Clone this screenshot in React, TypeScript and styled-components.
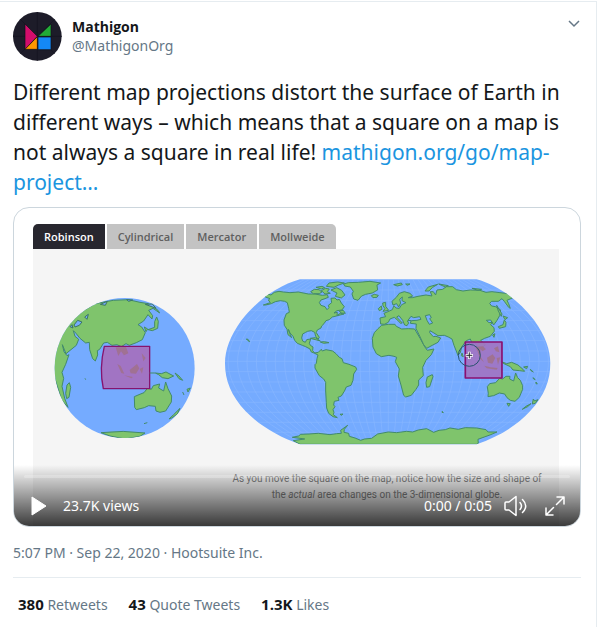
import React from "react";
import styled, { createGlobalStyle } from "styled-components";

const GlobalStyle = createGlobalStyle`
  *, *::before, *::after { box-sizing: border-box; }
  body {
    margin: 0;
    background: #fff;
    color: #14171a;
    font-family: "Noto Sans", "Open Sans", sans-serif;
    font-size: 14px;
    line-height: 20px;
  }
  button { font: inherit; color: inherit; border: 0; padding: 0; background: none; cursor: pointer; }
  a { color: inherit; text-decoration: none; }
  svg { display: block; }
`;

const Tweet = styled.article`
  margin-top: 1px;
  min-height: calc(100vh - 1px);
  padding: 10px 15px 12px 13px;
  border-top: 1px solid #e6ecf0;
  border-right: 1px solid #e6ecf0;
`;

const Header = styled.header`
  display: flex;
  align-items: flex-start;
  gap: 10px;
`;

const Author = styled.a`
  flex: 1;
  display: flex;
  flex-direction: column;
  padding-top: 5px;
  line-height: 19px;
`;

const Name = styled.strong`
  font-family: "Open Sans", sans-serif;
  font-weight: 700;
`;

const Count = styled(Name)`
  font-size: 15px;
`;

const Muted = styled.span`
  color: #657786;
`;

const MenuButton = styled.button`
  margin-top: 6px;
  margin-right: 1px;
`;

const Message = styled.p`
  margin: 16px 0 10px;
  font-size: 21px;
  line-height: 30px;
`;

const Link = styled.a`
  color: #1b95e0;
`;

const Player = styled.section`
  position: relative;
  overflow: hidden;
  border: 1px solid #ccd6dd;
  border-radius: 16px;
  background: #fff;
`;

const Scene = styled.div`
  padding: 16px 21px 0 19px;
`;

const Tabs = styled.div`
  display: flex;
  gap: 2px;
`;

const Tab = styled.button<{ $active?: boolean }>`
  height: 25px;
  padding: 0 11px;
  font-family: "Open Sans", sans-serif;
  font-size: 11px;
  font-weight: 600;
  color: ${(p) => (p.$active ? "#fff" : "#5f5f5f")};
  background: ${(p) => (p.$active ? "#28272f" : "#c3c3c3")};
  &:first-child { border-top-left-radius: 5px; }
  &:last-child { border-top-right-radius: 5px; }
`;

const Panel = styled.div`
  background: #f5f5f5;
`;

const Maps = styled.svg`
  width: 100%;
  height: auto;
`;

const Caption = styled.p`
  margin: 0;
  padding: 8px 14px 23px 196px;
  text-align: center;
  white-space: nowrap;
  font-family: Roboto, "Open Sans", sans-serif;
  font-size: 10px;
  line-height: 16px;
  color: #808080;
`;

const Overlay = styled.div`
  position: absolute;
  left: 0;
  right: 0;
  bottom: 0;
  padding: 10px 10px 8px;
  background: linear-gradient(rgba(0, 0, 0, 0), rgba(0, 0, 0, 0.77));
  color: #fff;
`;

const Progress = styled.div`
  height: 3px;
  border-radius: 2px;
  background: rgba(255, 255, 255, 0.25);
`;

const Controls = styled.div`
  display: flex;
  align-items: center;
  height: 40px;
  padding: 15px 5px 0 6px;
`;

const Views = styled.span`
  margin-left: 15px;
  margin-right: auto;
`;

const ControlButton = styled.button`
  margin-left: 12px;
  & + & { margin-left: 17px; }
`;

const PlayButton = styled.button`
  line-height: 0;
`;

const Meta = styled.div`
  padding: 16px 0 14px;
  border-bottom: 1px solid #e6ecf0;
  color: #657786;
`;

const Stats = styled.div`
  display: flex;
  gap: 21px;
  padding: 16px 5px 0;
`;

const stats = [
  { count: "380", label: "Retweets" },
  { count: "43", label: "Quote Tweets" },
  { count: "1.3K", label: "Likes" },
];

const tabs = ["Robinson", "Cylindrical", "Mercator", "Mollweide"];

const OUTLINE =
  "M255,28 C190,46 125,92 80,150 C45,198 30,240 30,280 C30,330 48,378 92,424 C135,468 190,500 255,523 H785 C850,500 905,468 945,424 C989,378 1006,330 1006,280 C1006,240 992,198 957,150 C912,92 850,46 785,28 Z";

const parallels = [60, 92, 122, 152, 182, 212, 243, 274, 305, 336, 366, 397, 427, 457, 487];
const meridians = Array.from({ length: 35 }, (_, i) => (i - 17) / 18);

const AMERICAS =
  "M148,76 L158,72 168,75 178,67 192,64 205,66 225,68 250,66 280,72 300,72 322,76 337,74 340,82 330,86 318,90 313,98 318,106 330,110 336,119 342,113 340,106 350,98 348,85 360,84 366,90 373,88 379,99 388,110 381,120 366,122 357,129 367,127 366,136 376,130 387,132 360,139 352,141 343,149 333,152 327,161 320,168 318,174 307,180 304,188 313,202 309,208 302,199 299,187 289,182 278,184 272,187 263,192 260,204 263,213 271,217 275,209 287,207 283,220 286,226 294,231 293,242 299,249 310,247 319,238 322,243 333,239 353,243 363,251 373,262 381,266 385,278 402,283 422,291 425,298 416,312 414,331 408,346 394,351 388,364 379,378 369,382 372,391 358,394 356,405 360,410 354,419 357,427 355,434 367,443 354,440 341,430 335,414 334,397 332,363 332,337 326,327 313,317 300,294 300,284 304,280 306,266 309,255 299,250 289,246 285,237 272,230 262,226 247,220 239,211 234,199 225,189 220,178 224,190 230,203 219,194 216,178 208,166 207,150 214,131 223,127 221,115 217,98 209,94 196,92 181,95 169,101 152,105 145,105 166,98 160,90 165,86 151,81 Z";
const NORTH_ISLANDS =
  "M386,42 L400,38 430,37 465,34 497,39 486,45 488,60 472,69 452,73 440,78 429,91 416,87 411,72 415,64 406,51 389,48 Z M469,77 L478,73 490,76 486,82 474,83 Z M287,65 L298,58 312,59 321,66 313,71 295,71 Z M303,52 L321,49 329,53 319,57 Z M319,62 L331,55 343,57 337,65 346,70 330,72 Z M334,49 L342,39 368,36 388,39 371,45 357,52 Z M348,60 L365,53 380,61 390,75 379,84 361,79 366,69 Z M373,123 L385,121 391,130 378,129 Z M286,205 L301,203 316,213 305,210 Z M316,216 L328,215 342,218 326,220 Z M94,207 L99,208 104,215 99,212 Z M375,433 L384,432 380,436 Z";
const AFRICA =
  "M5,166 L-6,176 -17,188 -23,205 -21,231 -11,251 4,260 27,256 42,259 50,262 46,275 58,297 55,318 63,345 71,376 77,381 94,376 108,358 116,345 116,330 130,317 128,292 138,271 154,254 162,237 142,241 134,230 121,206 108,184 104,177 85,176 65,177 49,169 45,163 25,163 Z";
const EURASIA =
  "M0,144 L2,162 13,163 25,157 30,147 43,142 51,149 62,160 67,159 50,141 57,137 68,151 74,165 81,167 86,159 82,153 94,150 91,160 109,162 108,176 119,198 131,224 140,235 157,226 174,217 182,204 168,199 160,200 149,188 150,182 165,191 174,197 193,196 205,201 216,207 222,226 234,256 241,248 245,231 259,212 271,207 276,220 284,217 293,230 307,233 316,224 302,211 314,205 331,199 343,184 342,173 332,164 338,157 327,158 319,151 332,150 341,165 350,153 359,137 362,120 347,110 335,108 329,100 335,94 355,94 366,86 373,94 386,112 391,115 386,101 381,91 397,84 404,81 386,71 360,68 336,65 318,67 300,61 271,60 249,63 229,59 218,50 199,50 188,58 171,60 167,75 160,65 151,65 156,78 138,75 114,79 97,83 85,83 98,78 90,70 73,65 58,70 49,82 36,94 39,105 50,101 56,111 62,99 59,88 67,81 66,92 78,98 65,104 58,115 48,114 42,107 37,119 24,125 12,130 17,140 Z";
const EAST_ISLANDS =
  "M8,99 L17,97 17,109 26,121 9,124 15,116 9,107 Z M-5,116 L4,108 6,118 -2,122 Z M41,44 L64,39 67,44 52,48 Z M77,42 L90,42 82,46 Z M135,63 L145,51 173,43 158,52 147,63 Z M176,42 L205,47 196,51 Z M276,55 L305,58 294,61 Z M142,321 L157,314 159,320 149,350 140,352 138,338 Z M350,106 L357,117 366,132 364,139 355,123 Z M369,138 L383,143 375,149 Z M373,150 L378,157 377,170 358,175 355,170 369,164 Z M362,274 L380,281 395,277 414,285 429,298 434,304 418,302 399,300 391,290 372,281 Z M431,291 L443,289 440,296 Z M322,350 L329,341 347,338 359,325 368,327 378,319 390,319 389,327 401,333 407,309 413,323 421,331 428,347 428,358 418,382 405,394 391,391 381,383 374,372 358,369 341,377 324,380 325,370 Z M381,400 L391,401 386,409 Z M460,387 L464,393 474,389 466,400 457,402 Z M453,401 L443,410 427,418 438,409 Z M451,298 L460,306 453,302 Z M459,323 L466,329 460,326 Z M468,336 L472,342 468,341 Z M187,424 L190,428 186,427 Z M246,249 L250,260 244,257 Z M345,191 L342,202 338,195 Z";
const ANTARCTICA =
  "M232,502 L251,498 257,493 282,492 310,490 345,494 365,491 379,490 377,481 398,466 388,478 387,487 401,490 403,499 420,504 437,511 449,507 470,505 488,492 520,486 545,488 575,484 593,486 610,480 635,476 656,487 672,481 691,479 705,474 730,478 751,473 785,474 813,479 819,486 846,486 825,495 789,508 790,520 785,523 H255 L235,512 269,507 Z";
const SEAS =
  "M84,151 L93,139 101,143 119,140 123,148 111,151 94,152 Z M136,137 L149,134 154,143 149,146 158,159 148,163 141,151 Z";

const GLOBE_LAND =
  "M65,125 L95,90 150,56 205,46 250,44 285,52 310,56 339,76 344,84 324,70 311,76 323,92 321,102 309,89 296,108 279,119 290,126 301,143 292,164 274,173 253,181 243,176 229,185 216,179 201,181 187,172 176,174 164,193 157,197 158,210 151,228 143,221 134,194 133,172 122,174 105,160 93,145 85,137 90,154 101,163 94,181 63,206 52,179 57,200 66,212 72,209 62,238 51,262 56,280 51,304 59,340 69,367 50,345 20,250 35,170 Z M66,300 L73,293 77,307 72,337 65,341 62,325 Z M268,335 L282,329 297,323 308,309 319,313 325,302 344,297 341,309 356,318 362,291 369,311 380,333 379,351 362,378 345,382 333,378 331,364 311,362 298,368 274,374 269,367 Z M331,264 L349,266 363,261 386,273 369,281 352,278 341,269 Z M390,264 L402,273 413,286 402,281 Z M426,313 L436,309 429,321 Z M372,402 L386,389 405,370 397,387 380,399 Z M335,96 L340,109 338,130 322,137 309,134 329,127 329,110 Z M298,126 L308,132 303,140 Z M168,443 Q235,435 300,444 L285,454 240,462 195,453 Z";
const GLOBE_DETAIL =
  "M87,120 L98,106 111,111 103,121 90,126 Z M119,96 L130,88 126,103 Z M166,58 L187,49 181,61 Z M245,44 L263,45 251,49 Z M301,58 L322,57 333,70 Z M75,125 L81,119 84,129 Z";

function MapsDrawing() {
  return (
    <Maps viewBox="33 249 526 214" role="img" aria-label="Globe beside a Robinson world map">
      <defs>
        <clipPath id="globe"><circle cx="239" cy="249" r="210" /></clipPath>
        <clipPath id="robinson"><path d={OUTLINE} /></clipPath>
      </defs>
      <g transform="translate(45 285) scale(0.3333)" strokeWidth="3" strokeLinejoin="round">
        <circle cx="239" cy="249" r="210" fill="#75abff" />
        <g clipPath="url(#globe)">
          <path d={GLOBE_LAND} fill="#7fc46c" stroke="#438b68" />
          <path d={GLOBE_DETAIL} fill="#75abff" stroke="#3b7560" />
        </g>
        <path d="M178,184 H314 V311 H175 Q162,250 178,184 Z" fill="#a174c3" stroke="#86146f" strokeWidth="4" />
        <g fill="#a0707f" opacity="0.7">
          <path d="M212,187 L243,186 250,205 237,211 228,199 220,213 Z" />
          <path d="M217,237 L227,243 238,266 229,264 Z M254,255 L276,237 283,250 273,266 257,265 Z M290,205 L302,219 295,229 Z M284,252 L295,247 291,266 Z M237,271 L264,276 259,280 Z" />
        </g>
        <path d="M314,264 H330 M120,280 l2,4 M297,416 l10,-3 M413,321 l4,9" fill="none" stroke="#438b68" />
      </g>
      <g transform="translate(215 270) scale(0.3333)" strokeWidth="3" strokeLinejoin="round">
        <path d={OUTLINE} fill="#75abff" />
        <g clipPath="url(#robinson)">
          <g fill="none" stroke="#a9caff" strokeWidth="2" opacity="0.35">
            {parallels.map((y) => <path key={y} d={`M20,${y} H1020`} />)}
            {meridians.map((m) => (
              <path key={m} d={`M${520 + m * 265},28 C${520 + m * 590},180 ${520 + m * 590},371 ${520 + m * 265},523`} />
            ))}
          </g>
          <g fill="#7fc46c" stroke="#438b68">
            <path d={AMERICAS} />
            <path d={NORTH_ISLANDS} />
            <path d={ANTARCTICA} />
            <g transform="translate(495 0)">
              <path d={AFRICA} />
              <path d={EURASIA} />
              <path d={EAST_ISLANDS} />
              <path d={SEAS} fill="#75abff" />
            </g>
          </g>
        </g>
        <g transform="translate(495 0)">
          <rect x="256" y="216" width="110" height="108" fill="#a174c3" fillOpacity="0.92" stroke="#8a1070" strokeWidth="5" />
          <g fill="#a0707f" opacity="0.75">
            <path d="M286,231 L309,229 318,238 307,244 301,237 302,260 312,277 300,266 293,244 Z M321,263 L338,253 346,264 337,281 324,278 Z M342,235 L354,229 358,247 348,244 Z M313,287 L332,292 353,294 350,299 320,295 Z M350,264 L361,262 354,284 Z" />
          </g>
          <circle cx="268" cy="256" r="33" fill="none" stroke="#28516e" strokeWidth="3" />
          <path d="M268,245 V267 M257,256 H279" stroke="#fff" strokeWidth="8" />
          <path d="M268,247 V265 M259,256 H277" stroke="#252831" strokeWidth="3" />
        </g>
      </g>
    </Maps>
  );
}

function Avatar() {
  return (
    <svg width="49" height="49" viewBox="0 0 147 147" aria-label="Mathigon logo">
      <circle cx="73" cy="73" r="73" fill="#1d1c29" />
      <path d="M73,0 V147 M0,73 H147 M22,22 L125,125 M125,22 L22,125" stroke="#141420" strokeWidth="2" />
      <g stroke="#111019" strokeWidth="2">
        <path d="M36,36 L73,73 L36,112 Z" fill="#d30d6c" />
        <path d="M114,36 V73 H75 Z" fill="#22ab36" />
        <path d="M73,74 V112 H36 Z" fill="#ff9800" />
        <path d="M75,75 H114 V113 H75 Z" fill="#1488f5" />
      </g>
    </svg>
  );
}

export default function App() {
  return (
    <>
      <GlobalStyle />
      <Tweet>
        <Header>
          <Avatar />
          <Author href="#mathigon">
            <Name>Mathigon</Name>
            <Muted>@MathigonOrg</Muted>
          </Author>
          <MenuButton aria-label="More options">
            <svg width="12" height="12" viewBox="0 0 12 12" fill="none" stroke="#657786" strokeWidth="1.5">
              <path d="M1,3 L6,8 L11,3" />
            </svg>
          </MenuButton>
        </Header>
        <Message>
          Different map projections distort the surface of Earth in different ways – which means that a square on a
          map is not always a square in real life! <Link href="#map-projections">mathigon.org/go/map-project…</Link>
        </Message>
        <Player>
          <Scene>
            <Tabs>
              {tabs.map((label, i) => <Tab key={label} $active={i === 0}>{label}</Tab>)}
            </Tabs>
            <Panel>
              <MapsDrawing />
              <Caption>
                As you move the square on the map, notice how the size and shape of
                <br />
                the <em>actual</em> area changes on the 3-dimensional globe.
              </Caption>
            </Panel>
          </Scene>
          <Overlay>
            <Progress />
            <Controls>
              <PlayButton aria-label="Play">
                <svg width="18" height="20" viewBox="0 0 18 20" fill="#fff" stroke="#fff" strokeLinejoin="round">
                  <path d="M2,1 L16,10 L2,19 Z" />
                </svg>
              </PlayButton>
              <Views>23.7K views</Views>
              <span>0:00 / 0:05</span>
              <ControlButton aria-label="Mute">
                <svg width="24" height="22" viewBox="0 0 24 22" fill="none" stroke="#fff" strokeWidth="1.5" strokeLinecap="round" strokeLinejoin="round">
                  <path d="M2,7 H5 L12,1.5 V20.5 L5,15 H2 Q1,15 1,14 V8 Q1,7 2,7 Z" />
                  <path d="M16,7.5 Q19,11 16,14.5 M18.5,4.5 Q25,11 18.5,17.5" />
                </svg>
              </ControlButton>
              <ControlButton aria-label="Full screen">
                <svg width="20" height="20" viewBox="0 0 20 20" fill="none" stroke="#fff" strokeWidth="1.5" strokeLinecap="round" strokeLinejoin="round">
                  <path d="M12,1 H19 V8 M19,1 L11.5,8.5 M8,19 H1 V12 M1,19 L8.5,11.5" />
                </svg>
              </ControlButton>
            </Controls>
          </Overlay>
        </Player>
        <Meta>5:07 PM · Sep 22, 2020 · Hootsuite Inc.</Meta>
        <Stats>
          {stats.map(({ count, label }) => (
            <a href={"#" + label.toLowerCase().replace(" ", "-")} key={label}>
              <Count>{count}</Count> <Muted>{label}</Muted>
            </a>
          ))}
        </Stats>
      </Tweet>
    </>
  );
}
